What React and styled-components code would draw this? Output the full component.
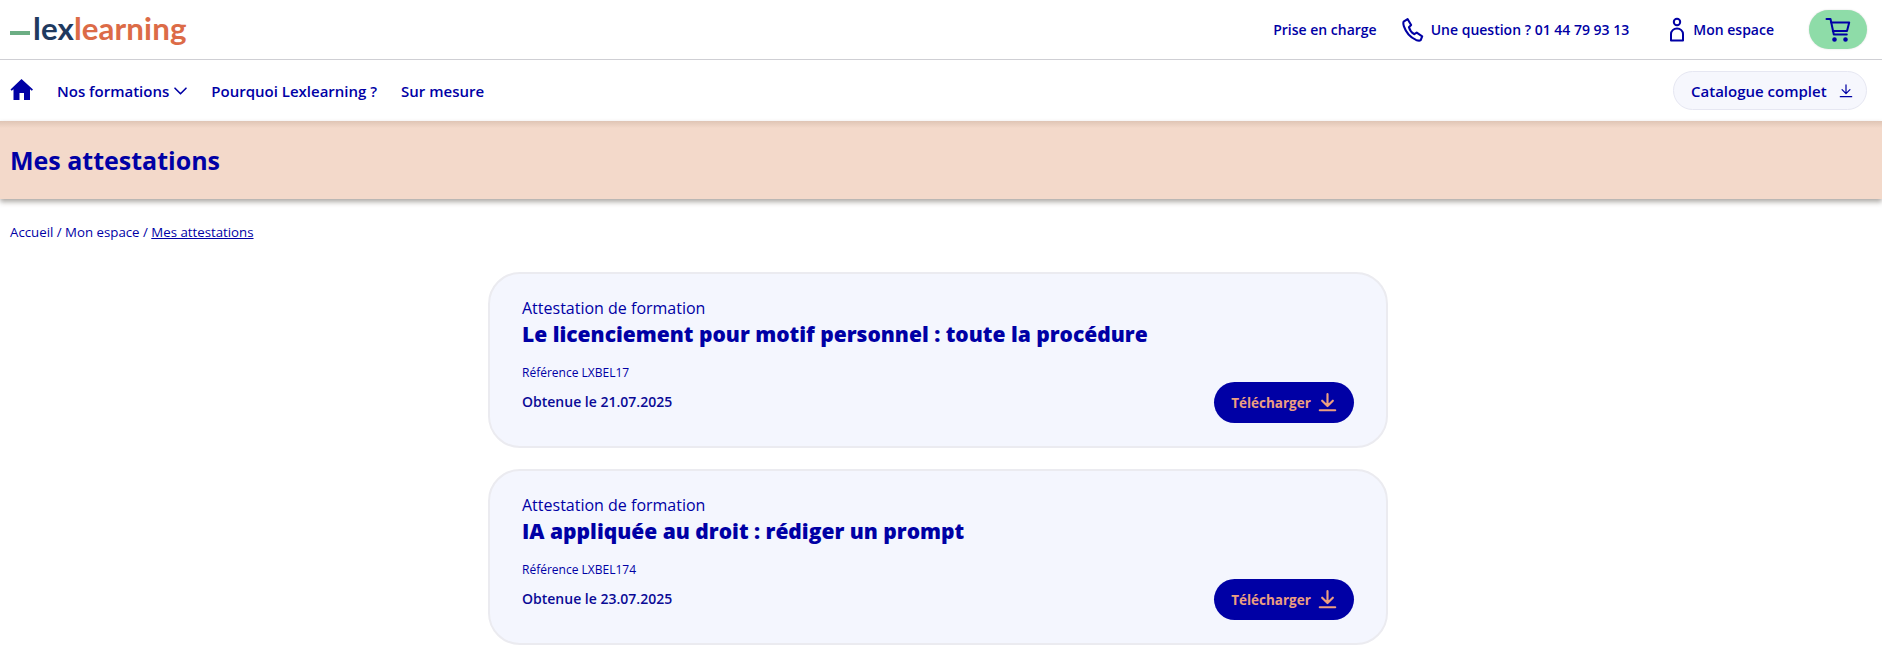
import React from 'react';
import styled, { createGlobalStyle } from 'styled-components';

const blue = '#0000a5';

const GlobalStyle = createGlobalStyle`
  html, body {
    margin: 0;
    padding: 0;
    background: #fff;
    overflow: hidden;
  }
  body {
    font-family: "Open Sans", "Noto Sans", sans-serif;
    color: ${blue};
  }
  * { box-sizing: border-box; }
`;

// header
const TopBar = styled.div`
  height: 60px;
  display: flex;
  align-items: center;
  justify-content: space-between;
  padding: 0 15px 0 10px;
  border-bottom: 1px solid #cfcfd4;
`;
const Logo = styled.div`
  display: flex;
  align-items: center;
  font-family: "Lato", sans-serif;
  font-size: 31.3px;
  font-weight: 700;
  letter-spacing: .1px;
  line-height: 1;
  margin-top: -2px;
`;
const LogoDash = styled.span`
  width: 20px;
  height: 4px;
  background: #6cae84;
  margin: 9px 3px 0 0;
`;
const LogoLex = styled.span`
  color: #1f3a5f;
`;
const LogoLearning = styled.span`
  color: #dc6b47;
`;
const TopLinks = styled.div`
  display: flex;
  align-items: center;
`;
const TopLink = styled.a`
  display: flex;
  align-items: center;
  gap: ${props => props.gap || 6}px;
  margin-right: ${props => props.after}px;
  font-size: 14px;
  font-weight: 600;
  color: ${blue};
  white-space: nowrap;
`;
const CartButton = styled.div`
  width: 58px;
  height: 39px;
  border-radius: 20px;
  background: #8edca8;
  box-shadow: 0 0 2px rgba(0, 0, 0, .15);
  display: flex;
  align-items: center;
  justify-content: center;
`;

// nav
const NavBar = styled.div`
  height: 61px;
  display: flex;
  align-items: center;
  justify-content: space-between;
  padding: 0 15px 0 10px;
`;
const NavLinks = styled.div`
  display: flex;
  align-items: center;
`;
const HomeIcon = styled.svg`
  width: 23px;
  height: 21px;
  margin-right: 24px;
  margin-top: -3px;
`;
const NavLink = styled.a`
  display: flex;
  align-items: center;
  gap: 5px;
  margin-right: 24px;
  font-size: 15px;
  font-weight: 600;
  color: ${blue};
`;
const CatalogButton = styled.a`
  width: 194px;
  height: 39px;
  display: flex;
  align-items: center;
  justify-content: space-between;
  padding: 0 13px 0 17px;
  border-radius: 20px;
  border: 1px solid #e6e7f2;
  background: #f6f7fd;
  font-size: 15px;
  font-weight: 600;
  color: ${blue};
  white-space: nowrap;
`;

// banner
const Banner = styled.div`
  height: 78px;
  display: flex;
  align-items: center;
  padding-left: 10px;
  background: linear-gradient(#dfc5b5, #f3d9ca 7px);
  box-shadow: 0 3px 5px rgba(60, 50, 40, .42);
  position: relative;
`;
const PageTitle = styled.h1`
  margin: 0;
  font-size: 25px;
  font-weight: 700;
  color: ${blue};
`;
const Breadcrumb = styled.div`
  padding: 24px 0 0 10px;
  height: 73px;
  font-size: 13.25px;
  line-height: 18px;
  color: ${blue};
`;
const Current = styled.span`
  text-decoration: underline;
`;

// cards
const CardList = styled.div`
  width: 900px;
  margin: 0 auto;
  display: flex;
  flex-direction: column;
  gap: 21px;
  transform: translateX(-3px);
`;
const Card = styled.div`
  height: 176px;
  padding: 23px 32px 0;
  border-radius: 32px;
  border: 2px solid #ebebf0;
  background: #f4f6fe;
`;
const CardKind = styled.div`
  font-size: 16px;
  line-height: 23px;
`;
const CardTitle = styled.div`
  font-size: 21px;
  font-weight: 800;
  line-height: 29px;
`;
const CardRef = styled.div`
  margin-top: 16px;
  font-size: 12px;
  line-height: 16px;
`;
const CardRow = styled.div`
  display: flex;
  justify-content: space-between;
  align-items: flex-start;
`;
const CardDate = styled.div`
  margin-top: 11px;
  font-size: 14px;
  font-weight: 600;
  line-height: 19px;
  color: #0a0a96;
`;
const DownloadButton = styled.a`
  width: 140px;
  height: 41px;
  margin-top: 1px;
  display: flex;
  align-items: center;
  justify-content: center;
  gap: 7px;
  border-radius: 21px;
  background: ${blue};
  color: #ec9f80;
  font-size: 13.5px;
  font-weight: 700;
`;

const PhoneIcon = () => (
  <svg width="24" height="25" viewBox="0 0 22 24" fill="none" stroke={blue} strokeWidth="2" strokeLinejoin="round">
    <path d="M2 4.500 5.800 2l3.400 5.600-2.100 2.200c.8 2.800 2.600 5.200 5.100 6.700l2.400-1.500 5.200 3.500-1.400 3.800c-1 .6-2.600.5-4.500-.3C9 19.800 4.200 14.600 2.300 9 1.700 7.200 1.500 5.600 2 4.500Z" />
  </svg>
);

const UserIcon = () => (
  <svg width="18" height="25" viewBox="0 0 18 25" fill="none" stroke={blue} strokeWidth="2">
    <circle cx="9" cy="5" r="3.200" />
    <path d="M3 23.500V17c0-3 2.600-5.500 6-5.500s6 2.500 6 5.500v6.500Z" strokeLinejoin="round" />
  </svg>
);

const CartIcon = () => (
  <svg width="26" height="26" viewBox="0 0 26 26" fill="none" stroke={blue} strokeWidth="2" strokeLinecap="round" strokeLinejoin="round">
    <path d="M1.500 2h4l3.300 15.500h13" />
    <path d="M6.200 5.500h18l-2.200 8.500H7.800" />
    <circle cx="9.500" cy="22.500" r="1.300" fill={blue} />
    <circle cx="20.500" cy="22.500" r="1.300" fill={blue} />
  </svg>
);

const Chevron = () => (
  <svg width="13" height="8" viewBox="0 0 13 8" fill="none" stroke={blue} strokeWidth="1.600" strokeLinecap="round" strokeLinejoin="round">
    <path d="M1 1.200 6.500 6.800 12 1.200" />
  </svg>
);

const DownloadIcon = ({ size, color, weight }) => (
  <svg width={size} height={size} viewBox="0 0 16 16" fill="none" stroke={color} strokeWidth={weight} strokeLinecap="round" strokeLinejoin="round">
    <path d="M8 1v9.500M3.500 6.500 8 11l4.500-4.500M1.500 14.500h13" />
  </svg>
);

const attestations = [
  { title: 'Le licenciement pour motif personnel : toute la procédure', ref: 'LXBEL17', date: '21.07.2025' },
  { title: 'IA appliquée au droit : rédiger un prompt', ref: 'LXBEL174', date: '23.07.2025' },
];

const App = () => (
  <>
    <GlobalStyle />
    <TopBar>
      <Logo>
        <LogoDash />
        <LogoLex>lex</LogoLex>
        <LogoLearning>learning</LogoLearning>
      </Logo>
      <TopLinks>
        <TopLink after={24}>Prise en charge</TopLink>
        <TopLink after={39}><PhoneIcon />Une question ? 01 44 79 93 13</TopLink>
        <TopLink after={35} gap={7}><UserIcon />Mon espace</TopLink>
        <CartButton><CartIcon /></CartButton>
      </TopLinks>
    </TopBar>
    <NavBar>
      <NavLinks>
        <HomeIcon viewBox="0 0 23 21">
          <path fill={blue} d="M11.500 0 23 10.500l-1.200 1.300-1.800-1.500V21h-6v-7H9.500v7h-6V10.300l-1.800 1.500L.5 10.500Z" />
        </HomeIcon>
        <NavLink>Nos formations <Chevron /></NavLink>
        <NavLink>Pourquoi Lexlearning ?</NavLink>
        <NavLink>Sur mesure</NavLink>
      </NavLinks>
      <CatalogButton>
        Catalogue complet
        <DownloadIcon size={14} color={blue} weight={1.400} />
      </CatalogButton>
    </NavBar>
    <Banner>
      <PageTitle>Mes attestations</PageTitle>
    </Banner>
    <Breadcrumb>Accueil / Mon espace / <Current>Mes attestations</Current></Breadcrumb>
    <CardList>
      {attestations.map(item => (
        <Card key={item.ref}>
          <CardKind>Attestation de formation</CardKind>
          <CardTitle>{item.title}</CardTitle>
          <CardRef>Référence {item.ref}</CardRef>
          <CardRow>
            <CardDate>Obtenue le {item.date}</CardDate>
            <DownloadButton>
              Télécharger
              <DownloadIcon size={19} color="#ec9f80" weight={1.800} />
            </DownloadButton>
          </CardRow>
        </Card>
      ))}
    </CardList>
  </>
);

export default App;
